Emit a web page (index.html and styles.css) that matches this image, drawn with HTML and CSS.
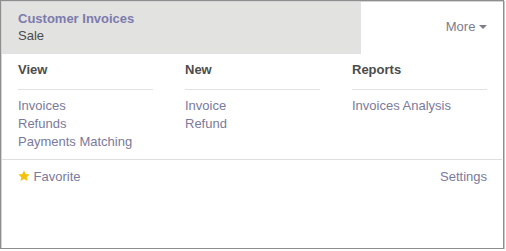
FILE: index.html
```html
<!DOCTYPE html>
<html lang="en">
<head>
    <meta charset="UTF-8">
    <meta name="viewport" content="width=device-width, initial-scale=1.0">
    <title>Customer Invoices</title>
    <link rel="stylesheet" href="styles.css">
</head>
<body>
    <div class="panel">
        <div class="panel-head">
            <div class="crumb">
                <div class="crumb-title">Customer Invoices</div>
                <div class="crumb-sub">Sale</div>
            </div>
            <div class="more">More <span class="caret"></span></div>
        </div>
        <div class="columns">
            <div class="col">
                <h4>View</h4>
                <a href="#">Invoices</a>
                <a href="#">Refunds</a>
                <a href="#">Payments Matching</a>
            </div>
            <div class="col">
                <h4>New</h4>
                <a href="#">Invoice</a>
                <a href="#">Refund</a>
            </div>
            <div class="col">
                <h4>Reports</h4>
                <a href="#">Invoices Analysis</a>
            </div>
        </div>
        <div class="panel-foot">
            <a href="#" class="fav">
                <svg width="12" height="12" viewBox="0 0 24 24"><path d="M12 1l3.4 7.1 7.8.9-5.8 5.4 1.6 7.7L12 18.2l-7 3.9 1.6-7.7L.8 9l7.8-.9z" fill="#f4c20d"/></svg>
                Favorite
            </a>
            <a href="#">Settings</a>
        </div>
    </div>
</body>
</html>
```

FILE: styles.css
```css
body {
    margin: 0;
    font-family: "Liberation Sans", Arial, sans-serif;
    font-size: 13px;
    color: #4c4c4c;
    background: #fff;
}
.panel {
    border: 1px solid #8e8e8e;
    box-shadow: inset 1px 1px 0 #d4d4d4, 1px 1px 0 #c8c8c8;
    padding: 1px;
    width: 500px;
    height: 245px;
}
a {
    color: #7c7bad;
    text-decoration: none;
}
.panel-head {
    display: flex;
    height: 52px;
}
.crumb {
    width: 359px;
    background: #e2e2e0;
    padding: 8px 16px 0;
    box-sizing: border-box;
    line-height: 18px;
}
.crumb-title {
    color: #7c7bad;
    font-weight: bold;
}
.crumb-sub {
    line-height: 16px;
}
.more {
    flex: 1;
    text-align: right;
    padding: 16px 15px 0 0;
    color: #7c7c8c;
    line-height: 18px;
}
.caret {
    display: inline-block;
    border-left: 4px solid transparent;
    border-right: 4px solid transparent;
    border-top: 4px solid #7c7c8c;
    vertical-align: 2px;
}
.columns {
    display: grid;
    grid-template-columns: repeat(3, 135px);
    column-gap: 32px;
    padding: 7px 16px 8px;
    line-height: 18px;
}
.col h4 {
    margin: 0 0 7px;
    font-size: 13px;
    padding-bottom: 10px;
    border-bottom: 1px solid #e2e2e2;
}
.col a {
    display: block;
    color: #7a7a9c;
}
.panel-foot {
    display: flex;
    justify-content: space-between;
    border-top: 1px solid #dedede;
    padding: 8px 15px 0 16px;
    line-height: 18px;
}
.panel-foot a {
    color: #7a7a9c;
}
.fav svg {
    vertical-align: -1px;
}
```
